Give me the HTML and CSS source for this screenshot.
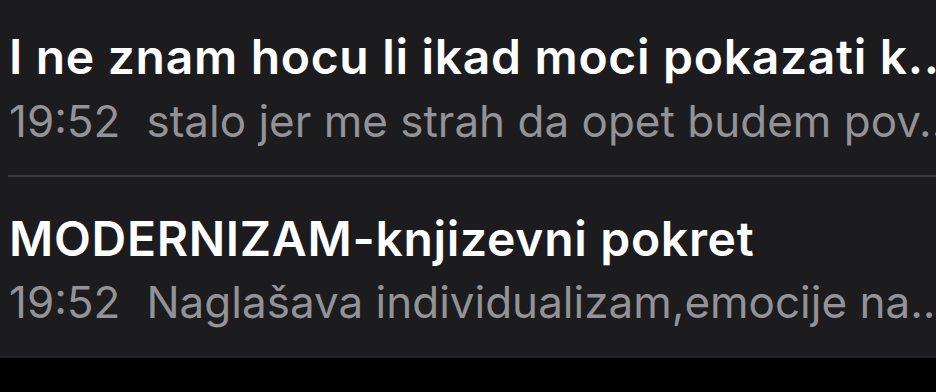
FILE: index.html
```html
<!DOCTYPE html>
<html lang="hr">
<head>
<meta charset="utf-8">
<title>Notes</title>
<link rel="stylesheet" href="styles.css">
</head>
<body>
<div class="panel">
  <ul class="notes">
    <li class="note">
      <div class="title">I ne znam hocu li ikad moci pokazati k...</div>
      <div class="meta"><span class="time">19:52</span><span class="preview">stalo jer me strah da opet budem pov...</span></div>
    </li>
    <li class="note">
      <div class="title">MODERNIZAM-knjizevni pokret</div>
      <div class="meta"><span class="time">19:52</span><span class="preview">Naglašava individualizam,emocije na...</span></div>
    </li>
  </ul>
</div>
</body>
</html>
```

FILE: styles.css
```css
html, body {
  margin: 0;
  padding: 0;
  background: #000;
  width: 936px;
  height: 392px;
  overflow: hidden;
}
.panel {
  background: #1c1c1e;
  height: 358px;
  overflow: hidden;
  font-family: Inter, "Noto Sans", sans-serif;
}
.notes {
  list-style: none;
  margin: -5px 0 0 0;
  padding: 0;
}
.note {
  padding: 34px 0 28px 9px;
}
.note:first-child {
  border-bottom: 2px solid #3a3a3c;
  margin-left: 8px;
  padding-left: 1px;
}
.note:last-child {
  border-bottom: 1px solid #262628;
  margin-left: 16px;
  padding-left: 0;
  margin-left: 0;
  padding-left: 9px;
}
.title {
  color: #ffffff;
  font-size: 48px;
  font-weight: 600;
  letter-spacing: 0.7px;
  line-height: 56px;
  white-space: nowrap;
  overflow: hidden;
}
.meta {
  margin-top: 9.5px;
  color: #929297;
  font-size: 44px;
  font-weight: 400;
  line-height: 52px;
  white-space: nowrap;
  overflow: hidden;
}
.time {
  margin-right: 26px;
}
```
